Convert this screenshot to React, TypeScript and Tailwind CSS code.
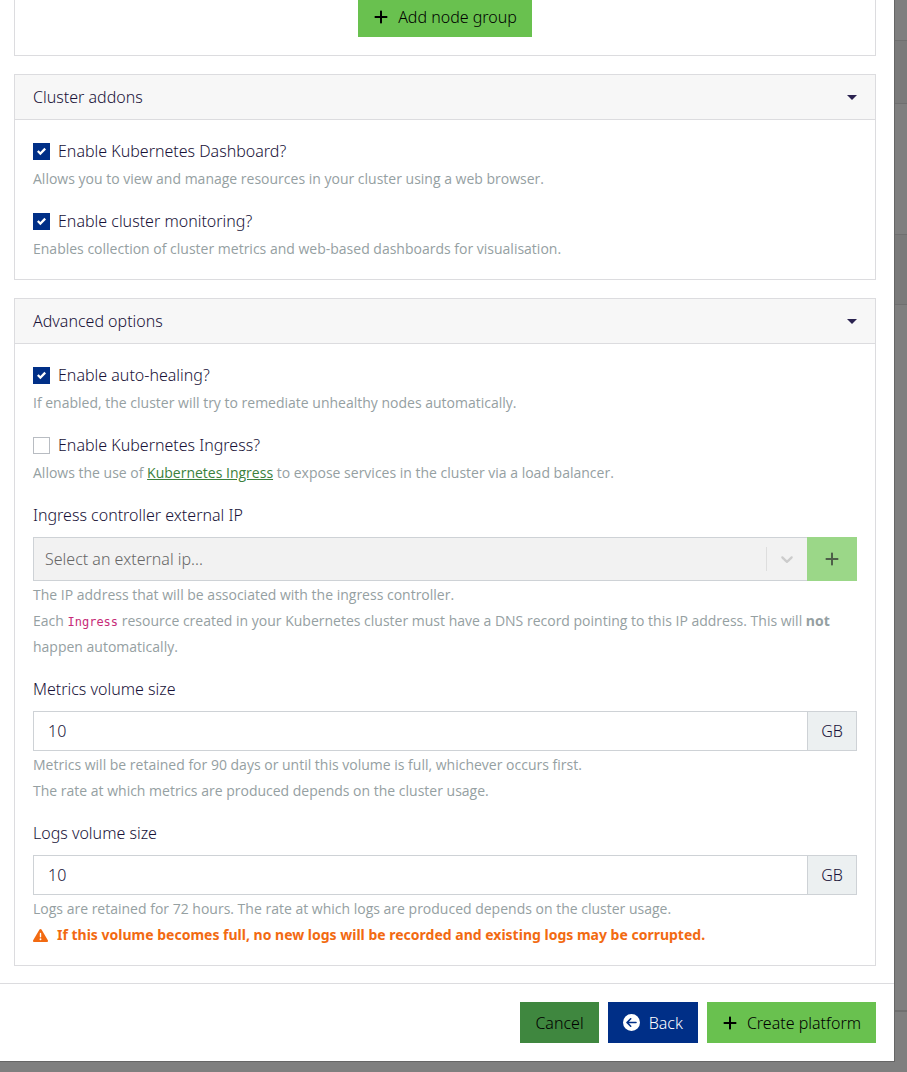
import React, { useId } from "react";
import { FaCircleArrowLeft, FaPlus, FaTriangleExclamation } from "react-icons/fa6";

function Card({ title, children }: { title: string; children: React.ReactNode }) {
  return (
    <section className="border border-[#dcdcdf] bg-white">
      <button
        type="button"
        className="flex h-[45px] w-full items-center justify-between border-b border-[#dcdcdf] bg-[#f7f7f7] px-[18px] text-left"
      >
        <span>{title}</span>
        <svg className="h-[5px] w-[10px]" viewBox="0 0 10 5" aria-hidden="true">
          <path d="M0 0h10L5 5z" fill="#2b2350" />
        </svg>
      </button>
      <div className="flex flex-col gap-4 px-[18px] pt-[18px] pb-[17px]">{children}</div>
    </section>
  );
}

function Help({ children }: { children: React.ReactNode }) {
  return (
    <div className="font-['Open_Sans','Noto_Sans',sans-serif] text-[14px] leading-[26px] font-normal text-[#95a0a2]">
      {children}
    </div>
  );
}

function CheckField({ label, checked, children }: { label: string; checked?: boolean; children: React.ReactNode }) {
  const id = useId();
  return (
    <div className="flex flex-col gap-0.5">
      <div className="flex items-center gap-2">
        <span className="grid">
          <input
            id={id}
            type="checkbox"
            defaultChecked={checked}
            className="peer col-start-1 row-start-1 size-[17px] appearance-none border border-[#b8bcc2] bg-white checked:border-[#002f87] checked:bg-[#002f87]"
          />
          <svg
            className="pointer-events-none invisible col-start-1 row-start-1 size-[9px] place-self-center peer-checked:visible"
            viewBox="0 0 8 8"
            aria-hidden="true"
          >
            <path fill="#fff" d="M6.564.75l-3.59 3.612-1.538-1.55L0 4.26l2.974 2.99L8 2.193z" />
          </svg>
        </span>
        <label htmlFor={id} className="leading-[26px]">
          {label}
        </label>
      </div>
      <Help>{children}</Help>
    </div>
  );
}

function SizeField({ label, children }: { label: string; children: React.ReactNode }) {
  const id = useId();
  return (
    <div>
      <label htmlFor={id} className="mb-[9px] block leading-[26px]">
        {label}
      </label>
      <div className="mb-px flex h-10">
        <input
          id={id}
          type="text"
          inputMode="numeric"
          defaultValue="10"
          className="min-w-0 flex-1 border border-[#ced2d6] bg-white px-[14px] outline-none"
        />
        <span className="flex w-[49px] items-center justify-center border border-l-0 border-[#ced2d6] bg-[#ecf0f1]">
          GB
        </span>
      </div>
      <Help>{children}</Help>
    </div>
  );
}

function ExternalIpField() {
  const id = useId();
  return (
    <div>
      <label htmlFor={id} className="mb-[9px] block leading-[26px]">
        Ingress controller external IP
      </label>
      <div className="mb-px flex h-11">
        <div className="relative min-w-0 flex-1">
          <select
            id={id}
            disabled
            className="h-full w-full appearance-none border border-r-0 border-[#ced2d6] bg-[#f2f2f2] px-[11px] text-[#666666] opacity-100"
          >
            <option>Select an external ip...</option>
          </select>
          <div className="pointer-events-none absolute inset-y-0 right-0 flex items-center">
            <span className="h-6 w-px bg-[#dedede]" />
            <span className="flex w-10 justify-center">
              <svg className="size-5" viewBox="0 0 20 20" fill="#cccccc" aria-hidden="true">
                <path d="M4.516 7.548c0.436-0.446 1.043-0.481 1.576 0l3.908 3.747 3.908-3.747c0.533-0.481 1.141-0.446 1.574 0 0.436 0.445 0.408 1.197 0 1.615-0.406 0.418-4.695 4.502-4.695 4.502-0.217 0.223-0.502 0.335-0.787 0.335s-0.57-0.112-0.789-0.335c0 0-4.287-4.084-4.695-4.502s-0.436-1.17 0-1.615z" />
              </svg>
            </span>
          </div>
        </div>
        <button
          type="button"
          disabled
          aria-label="Add external IP"
          className="flex w-[50px] items-center justify-center bg-[#9bd788] text-[#4e5f49]"
        >
          <FaPlus className="size-4" />
        </button>
      </div>
      <Help>
        <p>The IP address that will be associated with the ingress controller.</p>
        <p>
          Each <code className="font-['DejaVu_Sans_Mono',monospace] text-[12px] leading-none text-[#c72c78]">Ingress</code>{" "}
          resource created in your Kubernetes cluster must have a DNS record pointing to this IP address. This will{" "}
          <strong className="font-bold">not</strong> happen automatically.
        </p>
      </Help>
    </div>
  );
}

function Backdrop() {
  return (
    <div className="flex w-[13px] shrink-0 flex-col border-l border-[#666666]" aria-hidden="true">
      <div className="h-[41px] border-b border-[#6f6f6f]" />
      <div className="h-[63px] border-b border-[#6f6f6f] bg-[#7a7a7a]" />
      <div className="h-[131px] border-b border-[#6f6f6f]" />
      <div className="h-[70px] border-b border-[#6f6f6f] bg-[#7a7a7a]" />
      <div className="h-[707px] border-b-2 border-[#6f6f6f]" />
    </div>
  );
}

const button = "flex h-[41px] items-center gap-[9px] px-[15px]";

export default function App() {
  return (
    <div className="min-h-screen overflow-hidden bg-[#7f7f7f] font-['Noto_Sans','Open_Sans',sans-serif] text-[16px] font-light text-[#181238]">
      <div className="flex">
        <main className="min-w-0 flex-1 border-b border-[#666666] bg-white">
          <div className="flex flex-col gap-[18px] pr-[18px] pb-[17px] pl-[14px]">
            <section className="flex justify-center border border-t-0 border-[#dcdcdf] pb-[18px]">
              <button type="button" className={`${button} -mt-1 bg-[#69c14f] text-black`}>
                <FaPlus className="size-4" />
                Add node group
              </button>
            </section>

            <Card title="Cluster addons">
              <CheckField label="Enable Kubernetes Dashboard?" checked>
                Allows you to view and manage resources in your cluster using a web browser.
              </CheckField>
              <CheckField label="Enable cluster monitoring?" checked>
                Enables collection of cluster metrics and web-based dashboards for visualisation.
              </CheckField>
            </Card>

            <Card title="Advanced options">
              <CheckField label="Enable auto-healing?" checked>
                If enabled, the cluster will try to remediate unhealthy nodes automatically.
              </CheckField>
              <CheckField label="Enable Kubernetes Ingress?">
                Allows the use of{" "}
                <a href="#ingress" className="text-[#3b803c] underline">
                  Kubernetes Ingress
                </a>{" "}
                to expose services in the cluster via a load balancer.
              </CheckField>
              <ExternalIpField />
              <SizeField label="Metrics volume size">
                <p>Metrics will be retained for 90 days or until this volume is full, whichever occurs first.</p>
                <p>The rate at which metrics are produced depends on the cluster usage.</p>
              </SizeField>
              <SizeField label="Logs volume size">
                <p>Logs are retained for 72 hours. The rate at which logs are produced depends on the cluster usage.</p>
                <p className="flex items-center gap-[9px] font-['Noto_Sans','Open_Sans',sans-serif] font-bold text-[#f26a11]">
                  <FaTriangleExclamation className="size-[15px]" />
                  If this volume becomes full, no new logs will be recorded and existing logs may be corrupted.
                </p>
              </SizeField>
            </Card>
          </div>

          <footer className="flex justify-end gap-[9px] border-t border-[#dcdcdf] py-[18px] pr-[18px]">
            <button type="button" className={`${button} bg-[#3f873f] text-black`}>
              Cancel
            </button>
            <button type="button" className={`${button} bg-[#002f87] text-white`}>
              <FaCircleArrowLeft className="size-[17px]" />
              Back
            </button>
            <button type="button" className={`${button} bg-[#69c14f] text-black`}>
              <FaPlus className="size-4" />
              Create platform
            </button>
          </footer>
        </main>
        <Backdrop />
      </div>
    </div>
  );
}
